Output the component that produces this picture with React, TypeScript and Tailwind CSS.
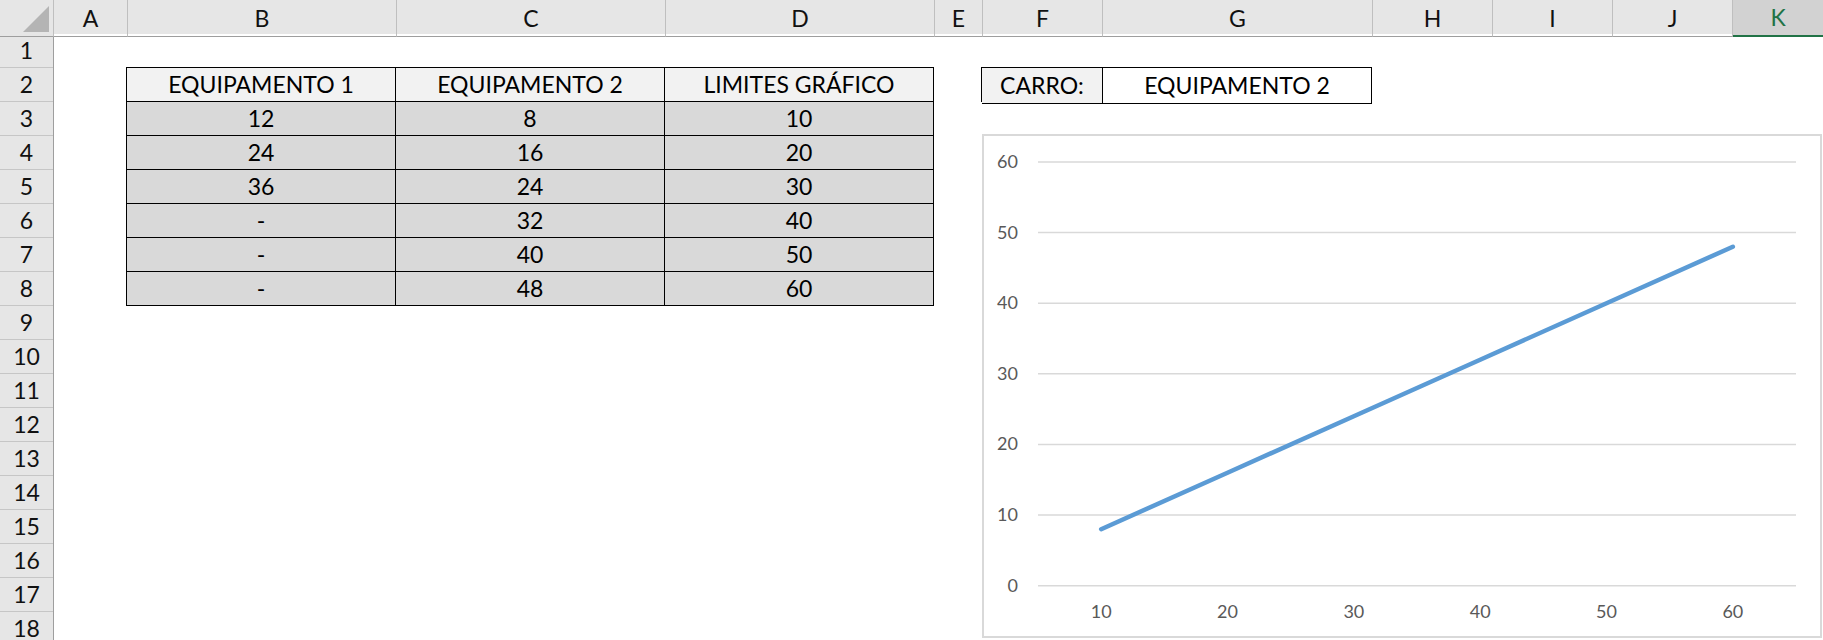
import React from "react";

// column letters across the top, K is the selected one
const columns = ["A", "B", "C", "D", "E", "F", "G", "H", "I", "J", "K"];

const headers = ["EQUIPAMENTO 1", "EQUIPAMENTO 2", "LIMITES GRÁFICO"];

const rows: string[][] = [
  ["12", "8", "10"],
  ["24", "16", "20"],
  ["36", "24", "30"],
  ["-", "32", "40"],
  ["-", "40", "50"],
  ["-", "48", "60"],
];

// chart data: x categories and the EQUIPAMENTO 2 series
const categories = [10, 20, 30, 40, 50, 60];
const series = [8, 16, 24, 32, 40, 48];
const yTicks = [60, 50, 40, 30, 20, 10, 0];

const Chart = () => {
  const plotLeft = 54;
  const plotRight = 812;
  const yZero = 449.7;
  const step = 70.62; // px per 10 units
  const catWidth = (plotRight - plotLeft) / categories.length;

  const yOf = (v: number) => yZero - (v / 10) * step;
  const xOf = (i: number) => plotLeft + catWidth * (i + 0.5);

  const points = series.map((v, i) => `${xOf(i)},${yOf(v)}`).join(" ");

  return (
    <div className="absolute left-[928px] top-[100px] w-[840px] h-[504px] bg-white border-2 border-[#d9d9d9]">
      <svg width="836" height="500" className="block">
        {yTicks.map((t) => (
          <g key={t}>
            <line
              x1={plotLeft}
              x2={plotRight}
              y1={yOf(t)}
              y2={yOf(t)}
              stroke="#d9d9d9"
              strokeWidth={1.5}
            />
            <text
              x={34}
              y={yOf(t) - 1}
              textAnchor="end"
              dominantBaseline="central"
              fill="#595959"
              fontSize={18}
              fontFamily="Lato, 'Liberation Sans', sans-serif"
            >
              {t}
            </text>
          </g>
        ))}
        {categories.map((c, i) => (
          <text
            key={c}
            x={xOf(i)}
            y={475.3}
            textAnchor="middle"
            dominantBaseline="central"
            fill="#595959"
            fontSize={18}
            fontFamily="Lato, 'Liberation Sans', sans-serif"
          >
            {c}
          </text>
        ))}
        <polyline
          points={points}
          fill="none"
          stroke="#5b9bd5"
          strokeWidth={4.5}
          strokeLinecap="round"
          strokeLinejoin="round"
        />
      </svg>
    </div>
  );
};

const App = () => {
  return (
    <div className="w-[1823px] h-[640px] overflow-hidden bg-white text-black text-[23px] font-[Lato,'Liberation_Sans',sans-serif]">
      {/* column header strip */}
      <div className="grid grid-cols-[54px_74px_269px_269px_269px_48px_120px_270px_120px_120px_120px_1fr] h-[34px] bg-[#e6e6e6]">
        <div className="relative border-r border-b border-r-[#bfbfbf] border-b-[#9e9e9e]">
          <svg className="absolute right-[4px] bottom-[4px]" width="26" height="26">
            <polygon points="26,0 26,26 0,26" fill="#b4b4b4" />
          </svg>
        </div>
        {columns.map((c) =>
          c === "K" ? (
            <div
              key={c}
              className="flex items-center justify-center bg-[#d2d2d2] border-b-2 border-[#217346] text-[#217346]"
            >
              {c}
            </div>
          ) : (
            <div
              key={c}
              className="flex items-center justify-center border-r border-b border-r-[#bfbfbf] border-b-[#9e9e9e] text-[#111]"
            >
              {c}
            </div>
          )
        )}
      </div>

      <div className="flex">
        {/* row numbers */}
        <div className="flex flex-col w-[54px] shrink-0 bg-[#e6e6e6] border-r border-[#9e9e9e]">
          {Array.from({ length: 18 }, (_, i) => (
            <div
              key={i}
              className="h-[34px] shrink-0 flex items-center justify-center border-b border-[#c6c6c6] text-[#111]"
            >
              {i + 1}
            </div>
          ))}
        </div>

        {/* sheet area */}
        <div className="relative flex-1 grid grid-cols-[73px_269px_269px_269px_48px_120px_270px_120px_120px_120px_1fr] grid-rows-[repeat(18,34px)]">
          {/* B2:D8 table */}
          <div className="col-start-2 col-span-3 row-start-2 row-span-7 -ml-px -mt-px grid grid-cols-3 grid-rows-7 border-l border-t border-black">
            {headers.map((h) => (
              <div
                key={h}
                className="flex items-center justify-center bg-[#f2f2f2] border-r border-b border-black"
              >
                {h}
              </div>
            ))}
            {rows.map((r, ri) =>
              r.map((v, ci) => (
                <div
                  key={`${ri}-${ci}`}
                  className="flex items-center justify-center bg-[#d9d9d9] border-r border-b border-black"
                >
                  {v}
                </div>
              ))
            )}
          </div>

          {/* F2:G2 car selector */}
          <div className="col-start-6 col-span-2 row-start-2 -ml-px -mt-px grid grid-cols-[121px_1fr] border-l border-t border-black">
            <div className="flex items-center justify-center bg-[#f2f2f2] border-r border-b border-black">
              CARRO:
            </div>
            <div className="flex items-center justify-center bg-white border-r border-b border-black">
              EQUIPAMENTO 2
            </div>
          </div>

          <Chart />
        </div>
      </div>
    </div>
  );
};

export default App;
